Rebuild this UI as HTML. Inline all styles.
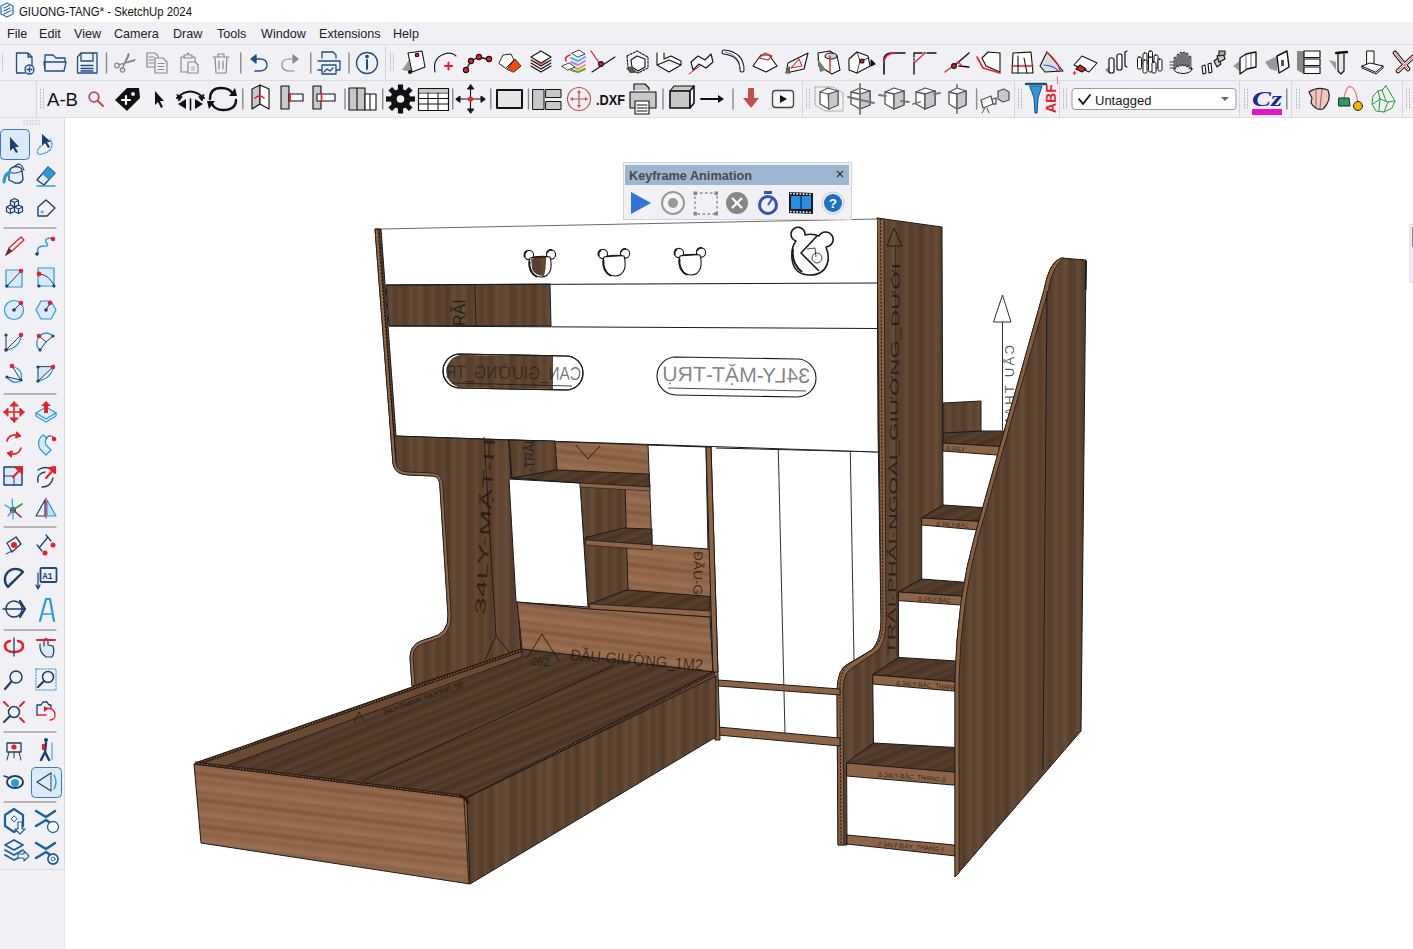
<!DOCTYPE html>
<html><head><meta charset="utf-8">
<style>
*{margin:0;padding:0;box-sizing:border-box}
html,body{width:1413px;height:949px;overflow:hidden;background:#fff;font-family:"Liberation Sans",sans-serif}
.abs{position:absolute}
#title{left:0;top:0;width:1413px;height:22px;background:#fff}
#title span{position:absolute;left:19px;top:5px;font-size:11.4px;color:#1a1a1a}
#menu{left:0;top:22px;width:1413px;height:23px;background:#f0f0f5;border-bottom:1px solid #dcdce2}
#menu span{position:absolute;top:5px;font-size:12.6px;color:#222}
#tb1{left:0;top:45px;width:1413px;height:36px;background:#f0f0f5;border-bottom:1px solid #dcdce2}
#tb2{left:0;top:81px;width:1413px;height:37px;background:#f0f0f5;border-bottom:1px solid #dcdce2}
#left{left:0;top:118px;width:65px;height:752px;background:#f0f0f5;border-right:1px solid #dcdce2;border-bottom:1px solid #dcdce2}
#lowleft{left:0;top:870px;width:65px;height:79px;background:#f0f0f5;border-right:1px solid #e8e8ee}
svg{position:absolute;left:0;top:0}
.t{font-family:"Liberation Sans",sans-serif}
</style></head><body>
<svg width="300" height="22" style="left:0;top:0"><text x="19" y="16" font-size="12.3" fill="#111" class="t" textLength="173" lengthAdjust="spacingAndGlyphs">GIUONG-TANG* - SketchUp 2024</text></svg>
<div id="menu" class="abs">
<span style="left:7px">File</span><span style="left:39px">Edit</span><span style="left:74px">View</span><span style="left:114px">Camera</span><span style="left:173px">Draw</span><span style="left:217px">Tools</span><span style="left:261px">Window</span><span style="left:319px">Extensions</span><span style="left:393px">Help</span>
</div>
<div id="tb1" class="abs"></div>
<div id="tb2" class="abs"></div>
<div id="left" class="abs"></div>
<div id="lowleft" class="abs"></div>
<svg width="1413" height="949" viewBox="0 0 1413 949">
<defs>
<linearGradient id="gwd" x1="0" y1="0" x2="1" y2="0">
<stop offset="0" stop-color="#5a422f"/><stop offset=".08" stop-color="#654a35"/><stop offset=".18" stop-color="#553e2b"/>
<stop offset=".3" stop-color="#614733"/><stop offset=".42" stop-color="#523b29"/><stop offset=".55" stop-color="#664b36"/>
<stop offset=".66" stop-color="#5b432f"/><stop offset=".78" stop-color="#684d37"/><stop offset=".9" stop-color="#543d2b"/><stop offset="1" stop-color="#5a422f"/>
</linearGradient>
<pattern id="wd" width="43" height="60" patternUnits="userSpaceOnUse">
<rect width="43" height="60" fill="url(#gwd)"/>
</pattern>
<linearGradient id="gwl" x1="0" y1="0" x2="0" y2="1">
<stop offset="0" stop-color="#93694b"/><stop offset=".15" stop-color="#9c7051"/><stop offset=".3" stop-color="#8a6145"/>
<stop offset=".45" stop-color="#966b4c"/><stop offset=".6" stop-color="#7f583e"/><stop offset=".75" stop-color="#976c4d"/><stop offset=".9" stop-color="#8b6246"/><stop offset="1" stop-color="#93694b"/>
</linearGradient>
<pattern id="wl" width="80" height="26" patternUnits="userSpaceOnUse" patternTransform="rotate(7)">
<rect width="80" height="26" fill="url(#gwl)"/>
</pattern>
<linearGradient id="gwt" x1="0" y1="0" x2="0" y2="1">
<stop offset="0" stop-color="#4f3828"/><stop offset=".2" stop-color="#58412f"/><stop offset=".4" stop-color="#4a3425"/>
<stop offset=".6" stop-color="#553e2c"/><stop offset=".8" stop-color="#483224"/><stop offset="1" stop-color="#4f3828"/>
</linearGradient>
<pattern id="wt" width="80" height="17" patternUnits="userSpaceOnUse" patternTransform="rotate(-22)">
<rect width="80" height="17" fill="url(#gwt)"/>
</pattern>
</defs>
<g stroke="#1a1a1a" stroke-width="1" stroke-linejoin="round">
<!-- ===== STAIRS ===== -->
<!-- arrow on wall -->
<line x1="1002.5" y1="322" x2="1002.5" y2="430" stroke-width=".9"/>
<path d="M993.5,322 L1011,322 L1002.5,295 Z" fill="#fff" stroke-width=".9"/>
<text class="t" transform="translate(1014,345) rotate(90) scale(1,-1)" font-size="13" fill="#222" fill-opacity=".75" stroke="none" textLength="95" lengthAdjust="spacing">CẦU THANG</text>
<!-- carcass -->
<path d="M877,218 L942,227 L943,505 L921.7,518 L921.7,579 L898.4,592 L898.6,657.4 L872.7,674.8 L873.5,743 L846.6,763 L847,845 L838,845 L837,690 Q838,668 848,664 L872,650 Q881,640 881,620 L878,430 Z" fill="url(#wd)"/>
<!-- treads -->
<path d="M943,431 L1010,431 L1010,447 L943,443 Z" fill="url(#wt)"/>
<path d="M943,443 L1010,447 L1010,456 L943,451 Z" fill="#8e6446"/>
<path d="M943,403 L981,401 L981,431 L943,433 Z" fill="url(#wd)"/>
<path d="M943,505 L990,508 L990,522 L921.7,518 Z" fill="url(#wt)"/>
<path d="M921.7,518 L990,522 L990,531 L921.7,525 Z" fill="#8e6446"/>
<path d="M921.7,579 L975,583 L975,597 L898.4,592 Z" fill="url(#wt)"/>
<path d="M898.4,592 L975,597 L975,606 L898.4,600.6 Z" fill="#8e6446"/>
<path d="M898.6,657.4 L965,661.5 L965,682.5 L872.7,674.8 Z" fill="url(#wt)"/>
<path d="M872.7,674.8 L965,682.5 L965,692 L873,684 Z" fill="#8e6446"/>
<path d="M873.5,743 L965,748 L965,785 L846.6,763 Z" fill="url(#wt)"/>
<path d="M846.6,763 L965,773 L965,786 L846.6,776 Z" fill="#8e6446"/>
<path d="M847,835 L965,846 L965,857 L847,844 Z" fill="#8e6446"/>
<g fill="#1a120c" fill-opacity=".8" stroke="none" font-family="Liberation Sans, sans-serif">
<text transform="translate(936,525.5) rotate(4)" font-size="6">∆ 34LY-BẬC</text>
<text transform="translate(918,600.5) rotate(4)" font-size="6">∆ 34LY-BẬC</text>
<text transform="translate(896,685) rotate(4.5)" font-size="6.5">∆ 34LY-BẬC_THANG</text>
<text transform="translate(878,776.5) rotate(4.5)" font-size="6.5">∆ 34LY-BẬC_THANG ∆</text>
<text transform="translate(878,846) rotate(5)" font-size="6.5">◊ 34LY-ĐÁY_THANG ◊</text>
<text transform="translate(946,450) rotate(4)" font-size="6">∆ 34LY</text>
</g>
<!-- carcass front strip -->
<path d="M877,218 L884,219 L886,620 Q886,645 876,652 L852,668 Q843,673 843,690 L844,845 L838,845 L837,690 Q838,668 848,664 L872,650 Q881,640 881,620 Z" fill="#8a6040" stroke-width="0.8"/>
<path d="M880.5,219 L883,620 Q883,642 873,649 L849,664 Q840,670 840,690 L841,845" stroke="#111" stroke-width="0.9" stroke-dasharray="2.2,1.4" fill="none"/>
<!-- big stair side panel -->
<path d="M1061,258 L1086,260 L1081,731 L955,877 L955,680 Q957,598 975,535 L1044,290 Q1049,262 1061,258 Z" fill="url(#wd)"/>
<path d="M1061,258 Q1049,262 1044,290 L975,535 Q957,598 955,680 L955,877 L959,873 L959,680 Q961,600 979,535 L1048,291 Q1053,265 1064,258 Z" fill="#8a6040" stroke-width="0.8"/>
<line x1="1047" y1="291" x2="1043" y2="770"/>
<line x1="1086" y1="261" x2="1085.5" y2="290" stroke-width="2"/>
</g>
<g stroke="#1a1a1a" stroke-width="1" stroke-linejoin="round">
<!-- ===== WARDROBE ===== -->
<path d="M716,448 L880,452" fill="none"/>
<line x1="778.3" y1="450" x2="785" y2="734" stroke-width="0.9"/>
<line x1="850.3" y1="452" x2="854" y2="660" stroke-width="0.9"/>
<path d="M718,680 L840,689 L840,695 L718,686 Z" fill="#8e6446"/>
<path d="M718,727 L840,738 L840,746 L718,735 Z" fill="#8e6446"/>
<path d="M706,447 L711,447 L720,740 L715,740 Z" fill="#8e6446"/>
<!-- ===== LOFT WHITE PANELS ===== -->
<path d="M381,229 L877,219 L877,452 L394,436 Z" fill="#fff" stroke="none"/><path d="M381,229 L877,219" stroke="#6a6a6a" stroke-width="1" fill="none"/><path d="M394,436 L877,452" stroke="#1a1a1a" stroke-width="1" fill="none"/>
<path d="M386,285 L550,284 L551,326 L389,326 Z" fill="url(#wd)"/>
<path d="M386,285 L877,283" fill="none"/>
<path d="M389,326 L877,328.5" fill="none"/>
<!-- post top -->
<!-- ===== LEFT SIDE PANEL ===== -->
<path d="M375,229 L381,229 L396,436 L509,440 L521,650 L412,686 L410,658 Q410,645 421,641 L430,638 Q449,634 448,615 L440,488 Q440,476 433,476 L409,475 Q395,475 393,464 Z" fill="url(#wd)"/>
<path d="M375,229 L379,229 L396,464 Q398,472 409,472 L433,473 Q443,474 443,488 L451,615 Q452,637 431,641 L422,644 Q413,647 413,658 L415,685 L412,686 L410,658 Q410,645 421,641 L430,638 Q449,634 448,615 L440,488 Q440,476 433,476 L409,475 Q395,475 393,464 Z" fill="#93674a" stroke-width="0.8"/>
<line x1="484" y1="437" x2="496" y2="636" stroke-width="0.9"/><path d="M378,229 L396,462" stroke="#111" stroke-width="1" stroke-dasharray="2.2,1.4" fill="none"/><line x1="475" y1="285" x2="476" y2="326" stroke-width="0.9"/>
<!-- ===== SHELF UNIT ===== -->
<path d="M509,440 L706,447 L716,672 L521,655 Z" fill="url(#wl)"/>
<path d="M509,440 L555,441 L557,470 L512,479 Z" fill="url(#wd)"/>
<path d="M580,483 L625,487 L628,592 L588,607 Z" fill="url(#wd)"/>
<path d="M509,479 L580,483 L588,607 L516,602 Z" fill="#fff"/>
<path d="M648,445 L706,447 L708,549 L652,545 Z" fill="#fff"/>
<path d="M512,478 L556,470 L649,474 L650,487 L580,483 Z" fill="url(#wt)"/>
<path d="M580,483 L650,487 L650,491 L580,487 Z" fill="#8e6446" stroke-width="0.6"/>
<path d="M585.6,537.5 L623.6,528 L652,529 L652,545 L585.6,540 Z" fill="url(#wt)"/>
<path d="M585.6,540 L652,545 L652,550 L585.6,545 Z" fill="#8e6446" stroke-width="0.6"/>
<path d="M589.8,604 L626.7,590 L710,596.5 L710,611 Z" fill="url(#wt)"/>
<path d="M589.8,604 L710,611 L710,617 L589.8,609 Z" fill="#8e6446" stroke-width="0.6"/>
<!-- lower bed headboard -->
<path d="M517,602 L589.8,609 L710,617 L713,672 L523,657 Z" fill="url(#wl)"/>
<path d="M706,447 L711,447 L718,672 L713,672 Z" fill="#8e6446"/>
<!-- ===== LOWER BED ===== -->
<path d="M194,764 L522,649 L713,672 L466,798 Z" fill="url(#wt)"/>
<path d="M194,765 L522,649 L522,657 L215,770 Z" fill="#6b4a34" stroke-width="0.8"/>
<path d="M196,764 L522,650" stroke="#2a1c12" stroke-width="3.5" fill="none"/>
<path d="M196,764 L522,650" stroke="#8a6a50" stroke-width="1.2" stroke-dasharray="1.5,1.5" fill="none"/>
<line x1="362" y1="781" x2="613" y2="666" stroke-width="0.9"/>
<path d="M466,798 L713,672 L716,678 L470,805 Z" fill="#6b4a34" stroke-width="0.8"/>
<path d="M468,798 L714,673" stroke="#2a1c12" stroke-width="2.5" fill="none"/>
<path d="M468,798 L714,673" stroke="#8a6a50" stroke-width="1" stroke-dasharray="1.5,1.5" fill="none"/>
<path d="M462,800 L716,676 L716,737 L470,884 Z" fill="url(#wd)"/>
<path d="M194,764 L460,797 Q466,798 467,804 L470,884 L201,843 Z" fill="url(#wl)"/>
<path d="M195,763 L460,796 Q467,797 468,804" stroke="#2a1c12" stroke-width="3" fill="none"/>
<path d="M195,763 L460,796" stroke="#8a6a50" stroke-width="1" stroke-dasharray="1.5,1.5" fill="none"/>
<path d="M464,799 L469,884" stroke="#3a2818" stroke-width="1.2" fill="none"/>
<text class="t" transform="translate(384,715) rotate(-19.5)" font-size="8" fill="#1a120c" fill-opacity=".85" stroke="none" textLength="85" lengthAdjust="spacingAndGlyphs">34LY-THÀNH_GIƯỜNG_BE</text>
<path d="M354,723 L359,712 L364,721" fill="none" stroke-width="0.8"/>
</g>
<g stroke="#1a1a1a" stroke-width="1" stroke-linejoin="round">
<!-- small bears -->
<g transform="translate(540,265)"><circle cx="-11" cy="-10" r="4.6" fill="#fff" stroke-width="1.1"/><circle cx="11" cy="-10.5" r="4.6" fill="#fff" stroke-width="1.1"/><path d="M-15,-8 A4.6,4.6 0 0 1 -13,-14" fill="none" stroke-width="2"/><path d="M7,-12 A4.6,4.6 0 0 1 12,-15" fill="none" stroke-width="1.8"/><path d="M-10,-7 Q0,-10 10,-8 Q12,-1 10.5,5 Q8,12 1,12 Q-6,12 -9,5 Q-12,-1 -10,-7 Z" fill="#fff" stroke-width="1.1"/><path d="M-9,-6 Q-2,-9 6,-8 Q6,4 4,11 Q-5,11 -8,4 Z" fill="url(#wd)" stroke="none"/><path d="M-10.5,-4 Q-12,7 -3,12" fill="none" stroke-width="2"/><path d="M-8,-7.5 L8,-8.5" fill="none" stroke-width="1.6"/></g>
<g transform="translate(614,264)"><circle cx="-11" cy="-10" r="4.6" fill="#fff" stroke-width="1.1"/><circle cx="11" cy="-10.5" r="4.6" fill="#fff" stroke-width="1.1"/><path d="M-15,-8 A4.6,4.6 0 0 1 -13,-14" fill="none" stroke-width="2"/><path d="M7,-12 A4.6,4.6 0 0 1 12,-15" fill="none" stroke-width="1.8"/><path d="M-10,-7 Q0,-10 10,-8 Q12,-1 10.5,5 Q8,12 1,12 Q-6,12 -9,5 Q-12,-1 -10,-7 Z" fill="#fff" stroke-width="1.1"/><path d="M-10.5,-4 Q-12,7 -3,12" fill="none" stroke-width="2"/><path d="M-8,-7.5 L8,-8.5" fill="none" stroke-width="1.6"/></g>
<g transform="translate(690,263)"><circle cx="-11" cy="-10" r="4.6" fill="#fff" stroke-width="1.1"/><circle cx="11" cy="-10.5" r="4.6" fill="#fff" stroke-width="1.1"/><path d="M-15,-8 A4.6,4.6 0 0 1 -13,-14" fill="none" stroke-width="2"/><path d="M7,-12 A4.6,4.6 0 0 1 12,-15" fill="none" stroke-width="1.8"/><path d="M-10,-7 Q0,-10 10,-8 Q12,-1 10.5,5 Q8,12 1,12 Q-6,12 -9,5 Q-12,-1 -10,-7 Z" fill="#fff" stroke-width="1.1"/><path d="M-10.5,-4 Q-12,7 -3,12" fill="none" stroke-width="2"/><path d="M-8,-7.5 L8,-8.5" fill="none" stroke-width="1.6"/></g>
<!-- big bear -->
<g transform="translate(810,255)">
<path d="M-14,-14 A7,7 0 1 1 -5,-20 Q2,-22 9,-19 A7.5,7.5 0 1 1 16,-8 Q19,0 18,6 Q15,20 0,20 Q-16,20 -18,4 Q-19,-8 -14,-14 Z" fill="#fff" stroke-width="1.6"/>
<path d="M7,-19 L-9,-2 L9,16" fill="none" stroke-width="1.6"/>
<circle cx="7" cy="3" r="5" fill="none" stroke-width="0.8"/>
<path d="M-3,-6 L5,-7 L6,2" fill="none" stroke-width="0.8"/>
<path d="M-17,-6 Q-19,8 -8,17" fill="none" stroke-width="2"/>
</g>
<!-- ovals -->
<path d="M460,354 L566,356 A17,17 0 0 1 566,390 L460,388 A17,17 0 0 1 460,354 Z" fill="#fff" stroke-width="1.1"/>
<path d="M460,355 L553,356 L553,389 L460,387.5 A16.5,16.5 0 0 1 460,355 Z" fill="url(#wd)" stroke="none"/>
<path d="M460,354 L566,356 A17,17 0 0 1 566,390 L460,388 A17,17 0 0 1 460,354 Z" fill="none" stroke-width="1.1"/>
<path d="M452,383 L572,386" fill="none" stroke-width="0.8"/>
<text class="t" transform="translate(513,379) scale(-1,1) rotate(-0.8)" text-anchor="middle" font-size="18.5" fill="#1a1a1a" fill-opacity=".6" stroke="none" textLength="136" lengthAdjust="spacingAndGlyphs">CAN_GIƯỜNG_TR</text>
<path d="M676,357 L797,359 A19,19 0 0 1 797,397 L676,395 A19,19 0 0 1 676,357 Z" fill="#fff" stroke-width="1.1"/>
<path d="M668,388 L806,391" fill="none" stroke-width="0.8"/>
<text class="t" transform="translate(736,382) scale(-1,1) rotate(-0.8)" text-anchor="middle" font-size="21" fill="#333" fill-opacity=".6" stroke="none" textLength="148" lengthAdjust="spacingAndGlyphs">34LY-MẶT-TRỤ</text>
<!-- text labels -->
<text class="t" transform="translate(465,326) rotate(-90)" font-size="16" fill="#222" stroke="none">RÃI</text>
<text class="t" transform="translate(485,615) rotate(-86.8)" font-size="14.5" fill="#1a120c" fill-opacity=".7" stroke="none" textLength="177" lengthAdjust="spacingAndGlyphs">34LY-MẶT-H</text>
<text class="t" transform="translate(570,660) rotate(4.5)" font-size="15.5" fill="#1a120c" fill-opacity=".7" stroke="none" textLength="133" lengthAdjust="spacingAndGlyphs">ĐẦU-GIƯỜNG_1M2</text>
<path d="M527,658 L542,634 L559,661" fill="none" stroke-width="0.9"/>
<text class="t" transform="translate(531,665) rotate(4)" font-size="11" fill="#222" stroke="none">262</text>
<path d="M496,636 L485,660 M496,636 L509,652" fill="none" stroke-width="0.9"/>
<text class="t" transform="translate(694,551) rotate(91)" font-size="12.5" fill="#1a120c" fill-opacity=".75" stroke="none" textLength="44" lengthAdjust="spacingAndGlyphs">ĐẦU-G</text>
<text class="t" transform="translate(534,472) rotate(-90)" font-size="12" fill="#222" stroke="none">-TRÂI</text>
<path d="M576,445 L588,459 L600,446" fill="none" stroke-width="0.9"/>
<text class="t" transform="translate(895,655) rotate(-89.3)" font-size="11" fill="#1a120c" fill-opacity=".75" stroke="none" textLength="392" lengthAdjust="spacingAndGlyphs">TRÁI-PHẢI-NGOÀI_GIƯỜNG_DƯỚI</text><line x1="895.5" y1="246" x2="897" y2="655" stroke-width="0.7" stroke-opacity=".8"/>
<path d="M887,246 L894,228 L902,246 Z" fill="none" stroke-width="0.9"/>

</g>
<!-- keyframe dialog -->
<g>
<rect x="623.5" y="162.5" width="228" height="57" fill="#f0f0f5" stroke="#d2d2da"/>
<rect x="625" y="165" width="224" height="20" fill="#9db5d1"/>
<text x="629" y="180" font-size="12.5" font-weight="bold" fill="#4a4a4a" class="t" textLength="123" lengthAdjust="spacingAndGlyphs">Keyframe Animation</text>
<path d="M837,171 L843,177 M843,171 L837,177" stroke="#333" stroke-width="1.2"/>
<path d="M631,192 L651,203 L631,214 Z" fill="#2f74d6"/>
<circle cx="673" cy="203" r="11" fill="#f4f4f4" stroke="#999" stroke-width="2"/>
<circle cx="673" cy="203" r="5" fill="#999"/>
<rect x="695" y="193" width="22" height="21" fill="none" stroke="#888" stroke-width="1.4" stroke-dasharray="2.5,2.5"/><g fill="#888"><rect x="693.5" y="191.5" width="3.5" height="3.5"/><rect x="714.5" y="191.5" width="3.5" height="3.5"/><rect x="693.5" y="212" width="3.5" height="3.5"/><rect x="714.5" y="212" width="3.5" height="3.5"/></g>
<circle cx="737" cy="203" r="11" fill="#888"/>
<path d="M732,198 L742,208 M742,198 L732,208" stroke="#fff" stroke-width="2.2"/>
<circle cx="768" cy="205" r="8.5" fill="none" stroke="#3b4fb5" stroke-width="3"/>
<rect x="764" y="191" width="8" height="3" fill="#3b4fb5"/>
<path d="M768,205 L772,199" stroke="#3b4fb5" stroke-width="2"/>
<path d="M789,192 L813,193 L813,214 L789,213 Z" fill="#1a1a1a"/><path d="M790,193.5 L812,194.5 M790,211.5 L812,212.5" stroke="#fff" stroke-width="1.6" stroke-dasharray="1.6,1.6"/>
<rect x="791" y="196" width="20" height="13" fill="#2a8fe0"/>
<line x1="801" y1="196" x2="801" y2="209" stroke="#114" stroke-width="1"/>
<circle cx="833" cy="203" r="11" fill="#eee" stroke="#ccc"/>
<circle cx="833" cy="203" r="9" fill="#1e6fc8"/>
<text x="833" y="208" font-size="13" font-weight="bold" fill="#fff" text-anchor="middle" class="t">?</text>
</g>

<g fill="none" stroke-linecap="round" stroke-linejoin="round">
<!-- toolbar dividers and grips -->
<g stroke="#d6d6de" stroke-width="1">
<line x1="385.5" y1="46" x2="385.5" y2="80"/>
<line x1="36.5" y1="82" x2="36.5" y2="117"/>
<line x1="802.5" y1="82" x2="802.5" y2="117"/>
<line x1="1014.5" y1="82" x2="1014.5" y2="117"/>
<line x1="1059.5" y1="82" x2="1059.5" y2="117"/>
<line x1="1239.5" y1="82" x2="1239.5" y2="117"/>
<line x1="1291.5" y1="82" x2="1291.5" y2="117"/>
<line x1="1402.5" y1="82" x2="1402.5" y2="117"/>
</g>
<g stroke="#b5b5bd" stroke-width="1" stroke-dasharray="1,2">
<line x1="2.5" y1="54" x2="2.5" y2="71"/>
<line x1="390.5" y1="54" x2="390.5" y2="71"/><line x1="393.5" y1="54" x2="393.5" y2="71"/>
<line x1="40.5" y1="89" x2="40.5" y2="108"/><line x1="43.5" y1="89" x2="43.5" y2="108"/>
<line x1="806.5" y1="89" x2="806.5" y2="108"/><line x1="809.5" y1="89" x2="809.5" y2="108"/>
<line x1="1018.5" y1="89" x2="1018.5" y2="108"/><line x1="1021.5" y1="89" x2="1021.5" y2="108"/>
<line x1="1063.5" y1="89" x2="1063.5" y2="108"/><line x1="1066.5" y1="89" x2="1066.5" y2="108"/>
<line x1="1244.5" y1="89" x2="1244.5" y2="108"/><line x1="1247.5" y1="89" x2="1247.5" y2="108"/>
<line x1="1296.5" y1="89" x2="1296.5" y2="108"/><line x1="1299.5" y1="89" x2="1299.5" y2="108"/>
<line x1="1406.5" y1="89" x2="1406.5" y2="108"/><line x1="1409.5" y1="89" x2="1409.5" y2="108"/>
</g>
<!-- separators -->
<g stroke="#8a8a8a" stroke-width="1.4">
<line x1="106.5" y1="53" x2="106.5" y2="73"/><line x1="240.8" y1="53" x2="240.8" y2="73"/><line x1="310.8" y1="53" x2="310.8" y2="73"/><line x1="349" y1="53" x2="349" y2="73"/>
<line x1="242.8" y1="89" x2="242.8" y2="109"/><line x1="345" y1="89" x2="345" y2="109"/><line x1="382.7" y1="89" x2="382.7" y2="109"/>
<line x1="452.7" y1="89" x2="452.7" y2="109"/><line x1="490.8" y1="89" x2="490.8" y2="109"/><line x1="528.5" y1="89" x2="528.5" y2="109"/>
<line x1="663" y1="89" x2="663" y2="109"/><line x1="733" y1="89" x2="733" y2="109"/><line x1="976.6" y1="89" x2="976.6" y2="109"/>
<line x1="1286.8" y1="89" x2="1286.8" y2="109"/>
</g>
<rect x="1410.5" y="224.5" width="3" height="58" fill="#f0f0f5" stroke="#d6d6de"/><rect x="1412" y="227" width="1.5" height="20" fill="#8a8a8a"/>
<!-- logo -->
<g stroke="#2b74c0" stroke-width="1.3" fill="none">
<path d="M1,6 L7,3 L13,6 L13,14 L7,17 L1,14 Z"/>
<path d="M4,8 L9,5.5 M4,11 L10,8 M4,14 L11,10.5"/>
</g>
<!-- ROW 1 -->
<g stroke="#1d4f85" stroke-width="1.3">
<path d="M28,53 L16.5,53 L16.5,73 L25,73 M28,53 L32,57 L32,66 M28,53 L28,57 L32,57"/>
<circle cx="29.5" cy="69.5" r="4.5" fill="#f0f0f5"/>
<path d="M27,69.5 L32,69.5 M29.5,67 L29.5,72"/>
<path d="M45,71 L45,55 L53,55 L56,58 L65,58 L65,62 M44,62 L66,62 L64,71 L45,71 Z"/>
<path d="M77.5,57 L81,53 L97,53 L97,73 L77.5,73 Z M81,53 L81,61 L93,61 L93,53 M81,65.5 L93,65.5 M81,68.5 L93,68.5 M81,71 L93,71"/>
</g>
<g stroke="#8a8a8a" stroke-width="1.2">
<path d="M118,65 L135,59.5 L134,61 Z M122,69 L128.5,53.5 L129,55.5 Z" fill="#8a8a8a"/>
<circle cx="117" cy="65.5" r="2.4"/><circle cx="122.5" cy="70" r="2.2"/>
<path d="M158,58 L158,56 L155,53 L147,53 L147,67 L155,67 M149,57 L154,57 M149,60 L154,60 M149,63 L154,63"/>
<path d="M155,58 L163,58 L167,62 L167,73 L155,73 Z" fill="#f0f0f5"/>
<path d="M158,63.5 L164,63.5 M158,66.5 L164,66.5 M158,69.5 L164,69.5"/>
<path d="M185,57 L181,57 L181,72 L188,72 M192,57 L195,57 L195,62"/>
<path d="M184,58 L184,55 L187,55 L188,53 L189,55 L192,55 L192,58 Z"/>
<path d="M188,62 L195,62 L198,65 L198,73 L188,73 Z" fill="#f0f0f5"/>
<rect x="191" y="66" width="4" height="5" fill="#d0d0d0" stroke="none"/>
<path d="M213,57 L229,57 M218,57 L218,54 L224,54 L224,57 M215,57 L216,73 L226,73 L227,57 M219,61 L219,69 M223,61 L223,69"/>
<path d="M295,59 L289,59 Q282,59 282,65 Q282,71 290,71 L294,71"/><path d="M298,59 L293,55 L293,63 Z" fill="#8a8a8a"/>
</g>
<g stroke="#1d4f85" stroke-width="1.3">
<path d="M254,59 L260,59 Q267,59 267,65 Q267,71 259,71 L255,71"/>
<path d="M251,59 L256,55 L256,63 Z" fill="#1d4f85"/>
<path d="M322,58 L322,52 L333,52 L336,55 L336,58 M318,61 L340,61 L340,70 L336,70 M322,70 L318,70 Z M322,65 L336,65 L336,74 L322,74 Z M324,72 L327,69 L330,71 L333,68"/>
<circle cx="367" cy="63" r="10.5"/>
<path d="M367,60 L367,69" stroke-width="2"/><circle cx="367" cy="56.5" r="1.2" fill="#1d4f85"/>
</g>
<!-- 3D icons row1 -->
<g stroke="#111" stroke-width="1.1">
<path d="M402,70 L409,60 L412,72 Z" fill="#999" stroke="none"/>
<path d="M408,53 L422,51 L425,67 L412,72 Z" fill="#fff"/>
<circle cx="417" cy="55" r="1.8" fill="#e8202a"/><circle cx="410" cy="72" r="1.5" fill="#111"/>
<path d="M435,72 Q432,56 448,53 Q453,53 456,56"/>
<path d="M445,66 L452,66 M448.5,62.5 L448.5,69.5" stroke="#e8202a" stroke-width="2"/>
<path d="M466,70 L471,61 L479,57 L487,59" stroke-width="1.3"/>
<circle cx="466" cy="70" r="2.6" fill="#e8202a"/><circle cx="471" cy="61" r="2.6" fill="#e8202a"/><circle cx="479" cy="57" r="2.6" fill="#e8202a"/><circle cx="489" cy="59" r="2.6" fill="#e8202a"/>
<path d="M499,63 L503,55 L511,54 L514,60 L506,68 Z" fill="#fff" stroke-width="0.9"/>
<path d="M507,69 L515,59 L521,66 L514,72 Z" fill="#f04a10" stroke-width="0.8"/>
<path d="M531,57 L541,51 L551,57 L541,63 Z" fill="#fff"/>
<path d="M531,60 L541,66 L551,60 M531,63 L541,69 L551,63 M531,66 L541,72 L551,66" />
<path d="M532,60 L541,65 L550,60 L541,63 Z" fill="#e0474a" stroke="none"/>
<path d="M572,53 L579,50 L585,54 L578,57 Z" fill="#fff" stroke-width="0.8"/>
<path d="M571,58 L578,61 L585,57" stroke="#39c0e0" stroke-width="2"/>
<path d="M571,62 L578,65 L585,61" stroke="#c07ee0" stroke-width="2"/>
<path d="M571,66 L578,69 L585,65" stroke="#e0a040" stroke-width="2"/>
<path d="M571,70 L578,72 L585,69" stroke="#60a050" stroke-width="2"/>
<path d="M562,66 L569,63 L575,67 L568,70 Z" fill="#fff" stroke-width="0.8"/>
<path d="M570,55 Q564,57 566,61" stroke="#e8202a" stroke-width="1.6"/>
<path d="M592,72 L615,57" /><path d="M591,51 L600,64" stroke="#e8202a" stroke-width="1.3"/>
<circle cx="601" cy="64" r="2.4" fill="#e8202a"/>
<path d="M627,56 L637,51 L648,57 L648,68 L638,73 L628,67 Z" stroke-dasharray="2,1.5"/>
<path d="M631,60 L637,56 L645,59 L645,67 L638,71 L632,67 Z" fill="#fff"/>
<path d="M626,68 L632,66 L636,73 L630,73 Z" fill="#555" stroke="none"/>
<path d="M657,53 L657,65 L669,72 L681,65 L681,61 L671,56 L664,59 L664,53 M657,65 L669,60 L681,65" fill="#fff"/>
<path d="M689,74 L712,57" stroke="#e8202a" stroke-width="1"/>
<path d="M691,62 L698,56 L705,60 L711,54 L713,62 L706,68 L699,64 L693,70 Z" fill="#fff"/>
<path d="M724,52 Q742,54 742,70" stroke-width="5" stroke="#111"/>
<path d="M724,52 Q742,54 742,70" stroke-width="3" stroke="#fff"/>
<path d="M725,52 Q740,55 740,68" stroke-width="0.8" stroke="#4040c0"/>
<path d="M753,66 L761,55 L769,55 L777,66 L766,72 Z" fill="#fff"/>
<path d="M759,58 L765,53 L772,56 L768,60 Z" stroke="#e8202a"/>
<path d="M786,73 L788,63 L808,53 L804,69 Z" fill="#fff"/>
<path d="M791,68 L799,59 L802,66 Z" stroke="#e8202a"/>
<path d="M786,68 L790,66 L790,74 L786,73 Z" fill="#666" stroke="none"/>
</g>
<g stroke="#111" stroke-width="1.1">
<path d="M818,53 L830,51 L837,56 L840,70 L832,74 L819,66 Z" fill="#fff"/>
<ellipse cx="831" cy="56" rx="6" ry="3" fill="#c8d0e8"/>
<line x1="830" y1="56" x2="830" y2="72" stroke="#e8202a" stroke-width="1.4"/>
<path d="M817,58 L820,72 L826,70 Z" fill="#777" stroke="none"/>
<path d="M849,59 L857,52 L868,56 L870,66 L857,73 L849,70 Z" fill="#fff"/>
<path d="M857,52 L860,61 L857,73 M860,61 L869,58" stroke-width="0.8"/>
<circle cx="862" cy="61" r="2" fill="#e8202a"/><path d="M871,60 L875,64 L871,66 Z" fill="#111"/>
<path d="M884,74 L884,60 Q884,53 892,53 L905,53" stroke-width="1.6"/>
<path d="M884,62 Q885,54 894,53" stroke="#e8202a" stroke-width="1.4"/>
<path d="M914,74 L914,53 L936,53" stroke-width="1.4" stroke-dasharray="12,2,1,2"/>
<path d="M914,63 L925,53" stroke="#e8202a" stroke-width="1.2"/>
<path d="M954,66 L969,53 M959,66 L969,67" stroke-width="1.4"/>
<path d="M945,72 L958,62 L962,66" stroke="#e8202a" stroke-width="1.3"/>
<circle cx="954" cy="66" r="2.4" fill="#e8202a"/>
<path d="M982,58 L988,52 L1000,53 L1000,72 L986,66 Z" fill="#fff"/>
<path d="M977,57 L983,68 L1000,73" stroke="#e8202a" stroke-width="1.6"/>
<path d="M1013,53 L1031,52 L1033,73 L1012,73 Z" fill="#fff"/>
<path d="M1012,66 L1033,66" stroke="#e8202a" stroke-width="1.6"/><path d="M1018,56 L1018,73 M1024,58 L1027,73" />
<path d="M1047,52 L1063,71 L1045,72 L1040,66 Z" fill="#ddd"/>
<path d="M1047,52 Q1060,64 1060,71" stroke="#e8202a" stroke-width="1.3"/><path d="M1044,65 Q1055,66 1058,71" stroke="#3050e0"/>
<path d="M1082,56 L1097,63 L1089,72 L1074,65 Z" fill="#fff"/>
<path d="M1080,65 L1086,69 L1082,72 L1076,69 Z" fill="#e8202a"/>
<path d="M1073,73 L1076,73 M1074.5,71.5 L1074.5,74.5" stroke="#e8202a"/>
</g>
<g stroke="#111" stroke-width="1">
<path d="M1105,70 L1110,66 L1110,74 Z" fill="#888" stroke="none"/>
<rect x="1109" y="58" width="5" height="15" rx="2" fill="#fff" stroke-width="1.2"/>
<rect x="1117" y="54" width="5" height="16" rx="2" fill="#fff" stroke-width="1.2"/>
<path d="M1127,51 L1125,52 L1125,66 L1127,67" stroke-width="1.2"/>
<g fill="#fff" stroke-width="1">
<rect x="1137.5" y="57" width="4" height="12" rx="1.5"/><rect x="1143" y="53" width="4" height="12" rx="1.5"/><rect x="1148.5" y="51" width="4" height="12" rx="1.5"/>
<rect x="1143" y="60" width="4" height="13" rx="1.5"/><rect x="1148.5" y="57" width="4" height="15" rx="1.5"/><rect x="1154" y="55" width="4" height="13" rx="1.5"/>
<rect x="1158" y="59" width="4" height="12" rx="1.5"/><rect x="1152" y="62" width="4" height="11" rx="1.5"/>
</g>
<ellipse cx="1183" cy="69" rx="9" ry="4.5" stroke-width="1"/>
<path d="M1175,58 L1175,68 M1178,55 L1178,66 M1181,53 L1181,65 M1184,53 L1184,65 M1187,54 L1187,66 M1190,57 L1190,68" stroke-width="2.6"/>
<path d="M1175,58 L1175,68 M1178,55 L1178,66 M1181,53 L1181,65 M1184,53 L1184,65 M1187,54 L1187,66 M1190,57 L1190,68" stroke-width="1" stroke="#ddd"/>
<path d="M1170,62 L1174,62 M1170,65 L1174,65 M1170,68 L1174,68" stroke-width=".8"/>
<g fill="#fff" stroke-width="1.1">
<path d="M1202,66 L1205,65 L1206,73 L1203,74 Z"/><path d="M1208,64 L1211,63 L1212,72 L1209,73 Z"/>
<path d="M1214,61 L1218,58 L1221,64 L1217,67 Z" fill="#ccc"/><path d="M1217,56 L1223,53 L1225,59 L1219,62 Z" fill="#ccc"/>
<path d="M1219,51 L1225,51 L1225,55 L1219,56 Z" fill="#aaa"/>
</g>
<path d="M1233,66 L1241,60 L1241,72 Z" fill="#999" stroke="none"/>
<path d="M1240,58 L1246,54 L1256,52 L1256,67 L1247,69 L1240,74 Z" fill="#fff" stroke-width="1.3"/>
<path d="M1246,54 L1246,69 M1251,53 L1251,68" stroke-width=".6"/>
<path d="M1265,62 L1277,56 L1277,71 L1270,69 Z" fill="#999" stroke="none"/>
<path d="M1277,56 L1287,51 L1289,67 L1279,73 Z" fill="#fff" stroke-width="1.4"/>
<rect x="1281" y="60" width="3" height="6" fill="#555" stroke="none"/>
<path d="M1297,51 L1304,51 L1304,74 L1297,70 Z" fill="#888" stroke="none"/>
<rect x="1304" y="51" width="16" height="6.5" fill="#fff" stroke-width="1.2"/><rect x="1304" y="59" width="16" height="6.5" fill="#fff" stroke-width="1.2"/><rect x="1304" y="67" width="16" height="6.5" fill="#fff" stroke-width="1.2"/>
<path d="M1329,60 L1336,70 L1336,62 Z" fill="#999" stroke="none"/>
<path d="M1336,53 L1347,52" stroke-width="2.4"/>
<path d="M1338,54 L1338,71 L1341,74 L1344,71 L1344,54" fill="#e8e8e8" stroke-width="1.2"/>
<path d="M1367,51 L1374,51 L1374,65 L1367,65 Z" fill="#fff" stroke-width="1"/>
<path d="M1362,66 L1370,63 L1383,66 L1376,72 Z M1362,66 L1362,68 L1376,74 L1383,68 L1383,66" fill="#fff" stroke-width="1"/>
<path d="M1395,53 L1408,69 M1413,57 L1398,71" stroke-width="4.5"/>
<path d="M1395,53 L1408,69 M1413,57 L1398,71" stroke-width="2.5" stroke="#fff"/>
<path d="M1395,53 L1408,69 M1413,57 L1398,71" stroke-width="0.8" stroke="#e8202a"/>
</g>
<!-- ROW 2 -->
<text x="47" y="106" font-size="17.5" fill="#111" class="t" textLength="31" lengthAdjust="spacingAndGlyphs">A-B</text>
<circle cx="94" cy="97" r="4.8" stroke="#c04a4a" stroke-width="1.8"/>
<line x1="98" y1="101" x2="103" y2="106" stroke="#c04a4a" stroke-width="2"/>
<path d="M115,100 L127,88 L139,88 L140,98 L127,111 Z" fill="#111"/>
<circle cx="133" cy="94" r="2" fill="#f0f0f5"/>
<path d="M122,100 L130,100 M126,96 L126,104" stroke="#fff" stroke-width="2.2"/>
<path d="M155,91 L155,105 L158,102 L161,108 L163,107 L160,101 L164,101 Z" fill="#111"/>
<path d="M177,98 Q190,85 204,98" stroke="#111" stroke-width="2"/>
<path d="M177,95 L179,101 L182,97 Z M204,95 L202,101 L199,97 Z" fill="#111" stroke="#111"/>
<path d="M178,104 L186,99 L186,109 Z M203,104 L195,99 L195,109 Z" fill="#111"/>
<line x1="190.5" y1="99" x2="190.5" y2="110" stroke="#111" stroke-width="1.6"/>
<path d="M210,99 Q210,88 221,88 Q230,88 233,94 M236,100 Q236,110 223,110 Q215,110 212,104" stroke="#111" stroke-width="2.4"/>
<path d="M229,96 L237,96 L235,88 Z M207,101 L215,101 L209,109 Z" fill="#111"/>
<path d="M252,89 L260,85 L260,104 L252,109 Z" fill="#c8c8c8" stroke="#111" stroke-width="1.1"/>
<path d="M260,85 L269,89 L269,109 L260,104 Z" fill="#fff" stroke="#111" stroke-width="1.1"/>
<path d="M255,98 Q260,94 264,98" stroke="#e8202a" stroke-width="1.6"/>
<rect x="281" y="86" width="8" height="23" fill="#c8c8c8" stroke="#111" stroke-width="1.1"/>
<rect x="289" y="94" width="14" height="7" fill="#fff" stroke="#111" stroke-width="1.1"/>
<line x1="290" y1="94" x2="290" y2="101" stroke="#e8202a" stroke-width="1.8"/>
<rect x="313" y="86" width="8" height="23" fill="#c8c8c8" stroke="#111" stroke-width="1.1"/>
<rect x="317" y="94" width="18" height="7" fill="#fff" stroke="#111" stroke-width="1.1"/>
<line x1="321.5" y1="94" x2="321.5" y2="101" stroke="#e8202a" stroke-width="1.8"/>
<path d="M349,88 L357,88 L357,110 L349,110 Z M357,88 L365,88 L365,110 L357,110 Z" fill="#c8c8c8" stroke="#111" stroke-width="1.1"/>
<path d="M365,94 L370,94 L370,110 L365,110 Z M370,94 L376,94 L376,110 L370,110 Z" fill="#fff" stroke="#111" stroke-width="1.1"/>
<g transform="translate(400.5,99)" fill="#111"><circle r="10"/><rect x="-2.6" y="-14.5" width="5.2" height="6" transform="rotate(0)"/><rect x="-2.6" y="-14.5" width="5.2" height="6" transform="rotate(45)"/><rect x="-2.6" y="-14.5" width="5.2" height="6" transform="rotate(90)"/><rect x="-2.6" y="-14.5" width="5.2" height="6" transform="rotate(135)"/><rect x="-2.6" y="-14.5" width="5.2" height="6" transform="rotate(180)"/><rect x="-2.6" y="-14.5" width="5.2" height="6" transform="rotate(225)"/><rect x="-2.6" y="-14.5" width="5.2" height="6" transform="rotate(270)"/><rect x="-2.6" y="-14.5" width="5.2" height="6" transform="rotate(315)"/><circle r="3.8" fill="#f0f0f5"/></g>

<rect x="418.5" y="88.5" width="30" height="22" fill="#fff" stroke="#111" stroke-width="1.2"/>
<path d="M418.5,93 L448.5,93 M418.5,98.5 L448.5,98.5 M418.5,104 L448.5,104 M428,88.5 L428,110.5 M438,88.5 L438,110.5" stroke="#111" stroke-width="1"/>
<rect x="419" y="89" width="29" height="3.5" fill="#c8c8c8"/>
<path d="M457,99 L484,99 M470.5,85 L470.5,112" stroke="#111" stroke-width="1.1"/>
<path d="M456,99 L460,96 L460,102 Z M485,99 L481,96 L481,102 Z M470.5,85 L467.5,89 L473.5,89 Z M470.5,113 L467.5,109 L473.5,109 Z" fill="#111" stroke="#111"/>
<circle cx="470.5" cy="99" r="2.6" fill="#e8202a"/>
<rect x="497" y="90" width="25" height="18" fill="#e6e6e6" stroke="#111" stroke-width="2"/>
<rect x="533" y="89.5" width="11" height="20" fill="#c8c8c8" stroke="#111" stroke-width="1"/>
<rect x="546" y="89.5" width="15" height="8" fill="#c8c8c8" stroke="#111" stroke-width="1"/>
<rect x="546" y="101.5" width="15" height="8" fill="#c8c8c8" stroke="#111" stroke-width="1"/>
<circle cx="579" cy="99" r="11.5" stroke="#c05555" stroke-width="1.2"/>
<path d="M571,99 L587,99 M579,91 L579,107" stroke="#c05555" stroke-width="1.2"/>
<path d="M570,99 L573,97 L573,101 Z M588,99 L585,97 L585,101 Z M579,90 L577,93 L581,93 Z M579,108 L577,105 L581,105 Z" fill="#c05555"/>
<text x="596" y="105" font-size="15.5" font-weight="bold" fill="#111" class="t" textLength="29" lengthAdjust="spacingAndGlyphs">.DXF</text>
<path d="M634,90 L634,84 L645,84 L649,88 L649,90 M630,92 L656,92 L656,108 L630,108 Z" fill="#c8c8c8" stroke="#111" stroke-width="1.1"/>
<rect x="635" y="101" width="14" height="13" fill="#fff" stroke="#111" stroke-width="1.1"/>
<path d="M637,105 L647,105 M637,108 L647,108 M637,111 L647,111" stroke="#111" stroke-width="1"/>
<path d="M670,91 L674,86 L694,86 L690,91 Z" fill="#c8c8c8" stroke="#111" stroke-width="1.1"/>
<rect x="670" y="91" width="20" height="17" fill="#c8c8c8" stroke="#111" stroke-width="1.6"/>
<path d="M690,91 L694,86 L694,103 L690,108 Z" fill="#fff" stroke="#111" stroke-width="1.6"/>
<path d="M701,99 L721,99" stroke="#111" stroke-width="1.8"/><path d="M718,95 L724,99 L718,103 Z" fill="#111"/>
<path d="M748,88 L754,88 L754,98 L759,98 L751,108 L743,98 L748,98 Z" fill="#c0504d"/>
<rect x="772.5" y="90.5" width="21" height="17" rx="3" fill="#f7f7f7" stroke="#444" stroke-width="1.3"/>
<path d="M780,95 L787,99 L780,103 Z" fill="#111"/>
<g stroke="#777" stroke-width="1">
<path d="M815,87 L833,87 L843,93 L843,111 L825,111 L815,105 Z" stroke="#aaa" stroke-dasharray="2,1"/>
<path d="M820,92 L828,88 L838,91 L838,105 L829,109 L820,104 Z" fill="#fff" stroke="#555" stroke-width="1.3"/>
<path d="M828,94 L838,91 M828,94 L829,109 M820,92 L828,94" stroke="#555"/>
<path d="M829,94 L838,91 L838,105 L829,109 Z" fill="#c8c8c8" stroke="#555"/>
</g>
<g stroke="#555" stroke-width="1.3">
<path d="M851,92 L860,88 L870,91 L870,105 L860,109 L851,104 Z" fill="#fff"/>
<path d="M860,94 L860,109 M851,92 L860,94 L870,91"/><path d="M860,94 L870,91 L870,105 L860,109 Z" fill="#c8c8c8"/>
<path d="M848,97 L874,103 M860,84 L860,114" stroke="#777" stroke-width="1.8"/>
<path d="M885,92 L894,88 L904,91 L904,105 L894,109 L885,104 Z" fill="#fff"/>
<path d="M894,94 L894,109 M885,92 L894,94 L904,91"/><path d="M894,94 L904,91 L904,105 L894,109 Z" fill="#c8c8c8"/>
<path d="M879,95 L886,96 M901,101 L909,102" stroke="#777" stroke-width="1.8"/>
<path d="M916,92 L925,88 L935,91 L935,105 L925,109 L916,104 Z" fill="#fff"/>
<path d="M925,94 L925,109 M916,92 L925,94 L935,91"/><path d="M925,94 L935,91 L935,105 L925,109 Z" fill="#c8c8c8"/>
<path d="M913,104 L920,102 M934,94 L940,93" stroke="#777" stroke-width="1.8"/>
<path d="M949,92 L957,88 L966,91 L966,105 L957,109 L949,104 Z" fill="#fff"/>
<path d="M957,94 L957,109 M949,92 L957,94 L966,91"/><path d="M957,94 L966,91 L966,105 L957,109 Z" fill="#c8c8c8"/>
<path d="M957,85 L957,88 M957,109 L957,113" stroke="#777" stroke-width="1.8"/>
<path d="M981,100 L991,96 L993,104 L983,108 Z M993,99 L996,98 L996,104 L993,104" fill="#fff"/>
<path d="M985,108 L982,113 M987,108 L989,113" stroke-width="1"/>
<path d="M998,91 L1004,89 L1009,92 L1009,100 L1003,102 L998,99 Z" fill="#c8c8c8"/>
</g>
<path d="M1026,84 L1046,84" stroke="#1d4f85" stroke-width="2.4"/>
<path d="M1030,86 L1042,86 L1038,98 L1037,113 L1035,113 L1034,98 Z" fill="#2c9ad8" stroke="#1d4f85" stroke-width="1"/>
<text transform="translate(1056,113) rotate(-90)" font-size="14" font-weight="bold" fill="#e8202a" class="t">ABF_</text>
<!-- Untagged dropdown -->
<rect x="1072" y="88.5" width="164" height="21" rx="3" fill="#fff" stroke="#9a9aa2"/>
<path d="M1079,99 L1083,104 L1090,95" stroke="#111" stroke-width="1.8"/>
<text x="1095" y="104.5" font-size="13" fill="#1a1a1a" class="t">Untagged</text>
<path d="M1221,97 L1229,97 L1225,101 Z" fill="#666"/>
<text x="1252" y="106" font-size="22" font-style="italic" font-weight="bold" fill="#1c2a9a" font-family="Liberation Serif, serif" textLength="30" lengthAdjust="spacingAndGlyphs">Cz</text>
<rect x="1252" y="109" width="30" height="6" fill="#e815c4"/>
<path d="M1309,92 Q1318,86 1328,90 Q1332,100 1323,109 Q1316,111 1311,103 L1312,98 Z" fill="#f0c8c0" stroke="#222" stroke-width="1.2"/>
<path d="M1316,90 L1316,107 M1322,89 L1320,108" stroke="#444" stroke-width=".7"/>
<path d="M1344,98 Q1347,84 1351,87 Q1356,88 1358,104" stroke="#f07060" stroke-width="1.2"/>
<path d="M1339,98 L1349,98 L1350,106 L1339,106 Z" fill="#2aa060" stroke="#222"/>
<circle cx="1358" cy="106" r="4.5" fill="#f0b800" stroke="#222"/>
<path d="M1386,86 L1395,101 L1392,108 L1384,112 L1376,111 L1372,104 L1373,96 L1378,91 L1382,90 Z M1378,91 L1380,99 L1373,104 M1380,99 L1388,102 L1395,101 M1388,102 L1384,112 M1382,90 L1386,86 M1380,99 L1379,110 M1382,90 L1386,101" stroke="#28a028" stroke-width="1"/>
</g>

<g fill="none" stroke-linecap="round" stroke-linejoin="round">
<!-- grip dots -->
<g fill="#b8b8c0" stroke="none">
<circle cx="24" cy="121" r=".7"/><circle cx="27" cy="121" r=".7"/><circle cx="30" cy="121" r=".7"/><circle cx="33" cy="121" r=".7"/><circle cx="36" cy="121" r=".7"/><circle cx="39" cy="121" r=".7"/>
<circle cx="24" cy="124" r=".7"/><circle cx="27" cy="124" r=".7"/><circle cx="30" cy="124" r=".7"/><circle cx="33" cy="124" r=".7"/><circle cx="36" cy="124" r=".7"/><circle cx="39" cy="124" r=".7"/>
</g>
<!-- separators -->
<g stroke="#7f7f7f" stroke-width="1.2">
<line x1="4" y1="228" x2="56" y2="228"/><line x1="4" y1="394" x2="56" y2="394"/><line x1="4" y1="527" x2="56" y2="527"/>
<line x1="4" y1="630" x2="56" y2="630"/><line x1="4" y1="732" x2="56" y2="732"/><line x1="4" y1="802" x2="56" y2="802"/>
</g>
<!-- selected boxes -->
<rect x="0.5" y="129.5" width="29" height="30" rx="4" fill="#dce9f6" stroke="#2f7bc6"/>
<rect x="31.5" y="767.5" width="30" height="30" rx="4" fill="#dce9f6" stroke="#2f7bc6"/>
<!-- row1: select, lasso -->
<path d="M10,137 L10,151 L13,148 L16,153 L18,152 L15,147 L19,147 Z" fill="#1b3f66"/>
<path d="M42,134 L42,146 L45,143 L48,148 L50,147 L47,142 L51,142 Z" fill="#1b3f66"/>
<path d="M41,146 Q36,150 38,154 Q44,155 50,150 Q54,144 50,139" stroke="#2c9ad8" stroke-width="1.2" stroke-dasharray="2,1.5"/>
<!-- row2: paint, eraser -->
<path d="M9,172 Q11,165 19,167 Q22,168 22,171 L23,179 Q22,184 15,183 L9,180 Z" fill="#e6eef7" stroke="#1b3f66" stroke-width="1.3"/><path d="M9,172 Q14,175 22,171" stroke="#1b3f66" stroke-width="1"/><path d="M14,167 Q20,160 24,170" stroke="#1b3f66" stroke-width="1.1"/>
<path d="M10,172 Q4,175 4,182" stroke="#2c9ad8" stroke-width="3.2"/>
<path d="M37,180 L48,167 L55,173 L44,185 Z" fill="#e6eef7" stroke="#1b3f66" stroke-width="1.3"/>
<path d="M42,174 L48,167 L55,173 L49,180 Z" fill="#2c9ad8"/>
<line x1="37" y1="186" x2="55" y2="186" stroke="#2c9ad8" stroke-width="1.4"/>
<!-- row3: components, tag -->
<g stroke="#1b3f66" stroke-width="1.2"><path d="M10.5,200.5 L14.5,198.5 L18.5,200.5 L18.5,205 L14.5,207 L10.5,205 Z M10.5,200.5 L14.5,202.5 L18.5,200.5 M14.5,202.5 L14.5,207"/><path d="M6.5,207 L10.5,205 L14.5,207 L14.5,211.5 L10.5,213.5 L6.5,211.5 Z M6.5,207 L10.5,209 L14.5,207 M10.5,209 L10.5,213.5"/><path d="M14.5,207 L18.5,205 L22.5,207 L22.5,211.5 L18.5,213.5 L14.5,211.5 Z M14.5,207 L18.5,209 L22.5,207 M18.5,209 L18.5,213.5"/></g>
<path d="M38,216 L38,207 L46,200 L55,208 L47,216 Z" stroke="#1b3f66" stroke-width="1.4"/>
<circle cx="42" cy="212" r="1" stroke="#2c9ad8"/>
<!-- row4: pencil, freehand -->
<path d="M6,255 L9,248 L21,237 L24,240 L12,251 Z" stroke="#e8202a" stroke-width="1.3"/>
<path d="M5,256 L9,248 L12,251 Z" fill="#1b3f66"/>
<path d="M38,253 Q36,246 44,246 Q50,247 46,242 Q44,238 52,238" stroke="#2c9ad8" stroke-width="1.4"/>
<circle cx="37" cy="254" r="1.8" fill="#1b3f66"/><circle cx="53" cy="239" r="2.3" fill="#e8202a"/>
<!-- row5: rect, rotated rect -->
<rect x="6" y="270" width="16" height="17" fill="#dceaf7" stroke="#2c9ad8" stroke-width="1.2"/>
<line x1="7" y1="286" x2="21" y2="271" stroke="#1b3f66"/>
<circle cx="7" cy="286" r="1.6" fill="#1b3f66"/><circle cx="21" cy="271" r="2.3" fill="#e8202a"/>
<rect x="38" y="268" width="16" height="18" fill="#dceaf7" stroke="#2c9ad8" stroke-width="1.2"/>
<path d="M39,274 Q48,274 54,285" stroke="#1b3f66"/>
<circle cx="39" cy="274" r="2.4" fill="#e8202a"/><circle cx="39" cy="286" r="1.6" fill="#1b3f66"/><circle cx="54" cy="286" r="1.6" fill="#1b3f66"/>
<!-- row6: circle, polygon -->
<circle cx="14" cy="310" r="9.5" fill="#dceaf7" stroke="#2c9ad8" stroke-width="1.2"/>
<line x1="14" y1="310" x2="21" y2="303" stroke="#1b3f66"/>
<circle cx="14" cy="310" r="1.8" fill="#1b3f66"/><circle cx="21" cy="303" r="2.3" fill="#e8202a"/>
<path d="M36,310 L41,301 L51,301 L56,310 L51,319 L41,319 Z" fill="#dceaf7" stroke="#2c9ad8" stroke-width="1.2"/>
<line x1="46" y1="310" x2="50" y2="303" stroke="#1b3f66"/>
<circle cx="46" cy="310" r="1.8" fill="#1b3f66"/><circle cx="50" cy="303" r="2.3" fill="#e8202a"/>
<!-- row7: arcs -->
<path d="M6,335 L6,350 L21,335" stroke="#1b3f66"/>
<path d="M6,350 Q20,348 21,335" stroke="#2c9ad8" stroke-width="1.3"/>
<circle cx="6" cy="335" r="1.6" fill="#1b3f66"/><circle cx="6" cy="350" r="1.8" fill="#1b3f66"/><circle cx="21" cy="335" r="2.3" fill="#e8202a"/>
<path d="M39,336 L46,342 L53,336 M46,342 L40,350" stroke="#1b3f66"/>
<path d="M39,336 Q34,346 40,350 M39,336 Q47,330 53,336" stroke="#2c9ad8" stroke-width="1.3"/>
<circle cx="39" cy="336" r="2.3" fill="#e8202a"/><circle cx="53" cy="336" r="1.6" fill="#1b3f66"/><circle cx="40" cy="350" r="1.6" fill="#1b3f66"/>
<!-- row8 -->
<path d="M12,366 L21,380 L7,377" stroke="#1b3f66"/>
<path d="M12,366 Q24,370 21,380 Q14,386 7,377" stroke="#2c9ad8" stroke-width="1.3"/>
<circle cx="12" cy="366" r="2.3" fill="#e8202a"/><circle cx="21" cy="380" r="1.6" fill="#1b3f66"/><circle cx="7" cy="377" r="1.6" fill="#1b3f66"/>
<path d="M38,367 L38,381 L53,367 Z" fill="#dceaf7" stroke="#1b3f66"/>
<path d="M38,381 Q52,378 53,367" stroke="#2c9ad8" stroke-width="1.3"/>
<circle cx="38" cy="367" r="1.6" fill="#1b3f66"/><circle cx="38" cy="381" r="1.6" fill="#1b3f66"/><circle cx="53" cy="367" r="2.3" fill="#e8202a"/>
<!-- row9: move, pushpull -->
<path d="M4,412 L24,412 M14,402 L14,422" stroke="#e8202a" stroke-width="1.6"/>
<path d="M4,412 L8,408 L8,416 Z M24,412 L20,408 L20,416 Z M14,402 L10,406 L18,406 Z M14,422 L10,418 L18,418 Z" fill="#e8202a" stroke="#e8202a"/>
<path d="M36,413 L46,407 L56,413 L46,419 Z" fill="#dceaf7" stroke="#2c9ad8" stroke-width="1.3"/>
<path d="M36,413 L36,416 L46,422 L56,416 L56,413" stroke="#2c9ad8" stroke-width="1.3"/>
<path d="M46,401 L41,406 L44,406 L44,413 L48,413 L48,406 L51,406 Z" fill="#e8202a"/>
<!-- row10: rotate, followme -->
<path d="M7,441 Q9,434 17,435 M21,448 Q19,455 11,454" stroke="#e8202a" stroke-width="1.6"/>
<path d="M17,432 L21,436 L16,438 Z M11,457 L7,453 L12,451 Z" fill="#e8202a" stroke="#e8202a"/>
<path d="M43,435 Q36,440 40,449 L46,455 L51,450 L46,445 Q44,441 47,438 Z" fill="#dceaf7" stroke="#2c9ad8" stroke-width="1.2"/>
<path d="M46,438 Q50,434 53,437" stroke="#1b3f66"/>
<circle cx="54" cy="439" r="2.3" fill="#e8202a"/>
<!-- row11: scale, offset -->
<rect x="4" y="467" width="18" height="18" fill="#dceaf7" stroke="#1b3f66" stroke-width="1.4"/>
<path d="M4,476 L14,476 L14,485" stroke="#1b3f66"/>
<path d="M13,477 L22,468 M16,468 L22,467 L22,473 Z" stroke="#e8202a" stroke-width="2" fill="#e8202a"/>
<path d="M38,482 Q36,474 45,472 M42,487 Q51,487 53,478 M38,470 Q45,465 53,470" stroke="#1b3f66" stroke-width="1.3"/>
<path d="M46,478 L54,469 M49,468 L55,467 L55,473 Z" stroke="#e8202a" stroke-width="2" fill="#e8202a"/>
<!-- row12: axes, mirror -->
<circle cx="13" cy="510" r="3" fill="#1b3f66"/>
<path d="M13,510 L12,499 M13,510 L22,504 M13,510 L21,517 M13,510 L5,505 M13,510 L8,516 M13,510 L13,519" stroke="#2c9ad8" stroke-width="1.2"/>
<path d="M13,510 L22,504" stroke="#3aa03a" stroke-width="1.6"/><path d="M13,510 L21,517" stroke="#e8202a" stroke-width="1.6"/>
<path d="M36,516 L45,500 L45,516 Z" stroke="#1b3f66" stroke-width="1.2"/>
<path d="M47,500 L56,516 L47,516 Z" fill="#bfe0f4" stroke="#2c9ad8" stroke-width="1.2"/>
<line x1="46" y1="498" x2="46" y2="518" stroke="#e8202a" stroke-width="1.2" stroke-dasharray="2,1"/>
<!-- row13: tape, dimension -->
<path d="M7,543 L16,537 L21,544 L12,552 Z" stroke="#1b3f66" stroke-width="1.3"/>
<circle cx="14" cy="545" r="3" fill="#e8202a"/>
<path d="M6,554 L12,551" stroke="#1b3f66"/>
<path d="M39,548 L48,537 M37,545 L42,551 M46,535 L51,541" stroke="#1b3f66" stroke-width="1.2"/>
<circle cx="53" cy="545" r="2.5" fill="#e8202a"/><circle cx="45" cy="553" r="2.5" fill="#e8202a"/>
<!-- row14: protractor, text -->
<path d="M8,587 L23,572 A10.6,10.6 0 0 0 8,587 Z" stroke="#1b3f66" stroke-width="2.4"/><path d="M9,584 L19,575" stroke="#1b3f66" stroke-width="0.8" stroke-dasharray="1,1.5"/>
<rect x="40.5" y="568" width="16" height="14" rx="1" stroke="#1b4f7a" stroke-width="1.8"/>
<text x="42.5" y="579" font-size="8.5" fill="#1b3f66" font-family="Liberation Mono, monospace" font-weight="bold">A1</text>
<path d="M38,573 L38,588 M36,585 L38,589 L40,585" stroke="#1b3f66" stroke-width="1.2"/>
<!-- row15: axes circle, 3D text -->
<circle cx="14" cy="609" r="8" stroke="#1b3f66" stroke-width="1.4"/>
<path d="M3,609 L25,609" stroke="#1b3f66" stroke-width="1.4"/><path d="M20,601 L25,609 L20,617" stroke="#1b3f66" stroke-width="2.2"/>
<path d="M40,621 L46,599 L50,599 L54,621" stroke="#2c9ad8" stroke-width="2.2" fill="none"/>
<path d="M42,614 L52,614" stroke="#2c9ad8" stroke-width="1.5"/>
<!-- row16: orbit, pan -->
<path d="M5,646 Q5,652 14,652 Q23,652 23,646 Q23,642 18,641" stroke="#e8202a" stroke-width="2.6"/>
<path d="M5,646 Q5,642 10,641" stroke="#e8202a" stroke-width="2.6"/>
<line x1="14" y1="638" x2="14" y2="656" stroke="#1b3f66" stroke-width="1.3"/>
<path d="M40,644 Q39,652 46,657 L52,657 Q55,652 53,646 L48,645 L48,640 Q46,637 44,640 L44,646" fill="#dceaf7" stroke="#1b3f66" stroke-width="1.2"/>
<path d="M37,640 L55,640" stroke="#e8202a" stroke-width="2"/>
<!-- row17: zoom, zoom window -->
<circle cx="16" cy="677" r="6" stroke="#1b3f66" stroke-width="1.5"/>
<line x1="11" y1="682" x2="5" y2="689" stroke="#1b3f66" stroke-width="2.2"/>
<rect x="36" y="669" width="20" height="21" stroke="#2c9ad8" stroke-dasharray="1.5,1.5"/>
<circle cx="48" cy="677" r="5.5" stroke="#1b3f66" stroke-width="1.5"/>
<line x1="44" y1="681" x2="38" y2="687" stroke="#1b3f66" stroke-width="2"/>
<!-- row18: zoom ext, previous -->
<circle cx="14" cy="712" r="5.5" stroke="#1b3f66" stroke-width="1.5"/>
<line x1="10" y1="716" x2="4" y2="722" stroke="#1b3f66" stroke-width="2"/>
<path d="M4,702 L8,706 M24,702 L20,706 M24,722 L20,718" stroke="#e8202a" stroke-width="2"/>
<path d="M37,715 L37,705 L41,705 L43,702 L47,702 L49,705 L51,705 L51,708" stroke="#1b3f66" stroke-width="1.3"/>
<path d="M37,715 L46,715 M46,708 Q55,708 55,715 Q55,720 50,720" stroke="#e8202a" stroke-width="1.3"/>
<path d="M44,706 L48,709 L44,712 Z" fill="#e8202a"/>
<!-- row19: position camera, walk -->
<rect x="7" y="743" width="14" height="9" stroke="#1b3f66" stroke-width="1.3"/>
<circle cx="14" cy="747" r="2.6" fill="#e8202a"/>
<path d="M9,752 L7,760 M19,752 L21,760 M14,752 L14,758" stroke="#1b3f66"/>
<circle cx="46" cy="740" r="2" fill="#1b3f66"/>
<path d="M46,743 L45,752 L41,760 M45,752 L49,760" stroke="#1b3f66" stroke-width="2.4"/>
<rect x="42" y="744" width="3" height="6" fill="#e8202a"/>
<line x1="52" y1="743" x2="52" y2="760" stroke="#2c9ad8"/>
<!-- row20: eye, section -->
<ellipse cx="15" cy="782" rx="8" ry="6" fill="#fff" stroke="#1b3f66" stroke-width="2"/>
<circle cx="15" cy="783" r="4" fill="#2c9ad8"/>
<path d="M4,776 L10,778" stroke="#1b3f66" stroke-width="1.5"/>
<path d="M37,782 L51,773 M37,782 L51,791 M37,782 L37,782" stroke="#1b3f66" stroke-width="1.2"/>
<path d="M51,773 L51,791" stroke="#1b3f66" stroke-dasharray="2,1"/>
<path d="M54,775 Q58,782 54,789" stroke="#2c9ad8" stroke-width="1.4"/>
<!-- row21 -->
<path d="M5,815 L14,809 L23,815 L23,826 L14,832 L5,826 Z" stroke="#1b5fa0" stroke-width="2.2"/>
<path d="M14,816 L11,819 L14,822 L17,819 Z" stroke="#1b5fa0"/>
<path d="M18,822 L18,829 L15,829 L20,834 L25,829 L22,829 L22,822 Z" fill="#fff" stroke="#1b5fa0" stroke-width="1.2"/>
<path d="M36,811 L46,817 L55,811 M36,826 L46,820 L55,826" stroke="#1b5fa0" stroke-width="2.6"/>
<circle cx="53" cy="827" r="5.5" fill="#fff" stroke="#1b5fa0" stroke-width="1.3"/>
<!-- row22 -->
<path d="M5,845 L14,840 L23,845 L14,850 Z M5,850 L14,855 L23,850 M5,855 L14,860 L20,857" stroke="#1b5fa0" stroke-width="1.8"/>
<path d="M18,854 L24,854 L24,851 L29,856 L24,861 L24,858 L18,858 Z" fill="#fff" stroke="#1b5fa0" stroke-width="1.1"/>
<path d="M36,843 L46,849 L55,843 M36,858 L46,852 L55,858" stroke="#1b5fa0" stroke-width="2.6"/>
<circle cx="53" cy="859" r="5" fill="#fff" stroke="#1b5fa0" stroke-width="1.8" stroke-dasharray="1.6,1"/>
<circle cx="53" cy="859" r="2" stroke="#1b5fa0"/>
</g>

</svg>
</body></html>
